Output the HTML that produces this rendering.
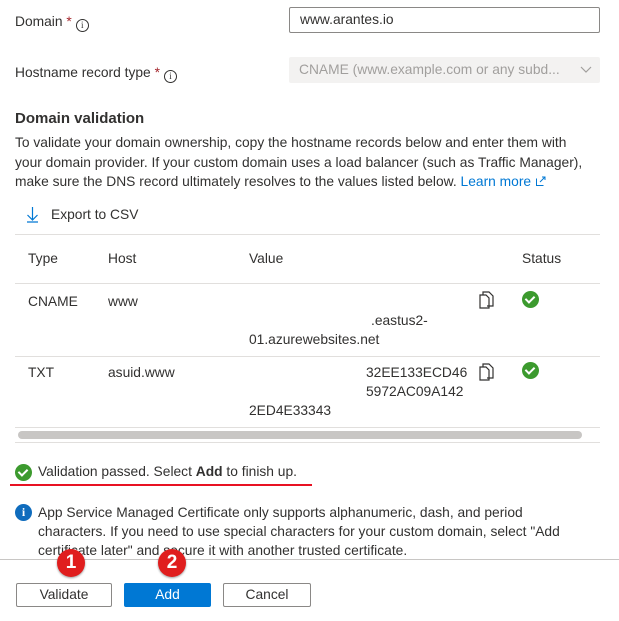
<!DOCTYPE html>
<html><head><meta charset="utf-8"><style>
*{margin:0;padding:0;box-sizing:border-box}
body{width:619px;height:621px;background:#fff;font-family:"Liberation Sans",Arial,sans-serif;font-size:13.8px;color:#323130;position:relative;overflow:hidden}
.a{position:absolute;white-space:nowrap;line-height:19px}
.req{color:#a4262c}
.info{display:inline-block;width:13px;height:13px;border:1px solid #323130;border-radius:50%;font-size:9px;line-height:11px;text-align:center;vertical-align:-2px;margin-left:4px;font-family:"Liberation Serif",serif}
.hl{position:absolute;left:15px;width:585px;height:1px;background:#e1dfdd}
.chk{position:absolute;width:17px;height:17px;border-radius:50%;background:#3c9a2e}
.chk:after{content:"";position:absolute;left:5px;top:3px;width:4px;height:7px;border:solid #fff;border-width:0 2px 2px 0;transform:rotate(45deg)}
.btn{position:absolute;top:583px;height:24px;border:1px solid #8a8886;border-radius:2px;text-align:center;line-height:22px;background:#fff}
.badge{position:absolute;width:28px;height:28px;border-radius:50%;background:#e01e1e;color:#fff;font-weight:bold;font-size:19px;text-align:center;line-height:28px;top:549px;box-shadow:0 1px 2px rgba(0,0,0,.4)}
</style></head><body>
<div class="a" style="left:15px;top:12px">Domain <span class="req">*</span><span class="info">i</span></div>
<div style="position:absolute;left:289px;top:7px;width:311px;height:26px;border:1px solid #8a8886;border-radius:2px"></div>
<div class="a" style="left:300px;top:10px">www.arantes.io</div>
<div class="a" style="left:15px;top:63px">Hostname record type <span class="req">*</span><span class="info">i</span></div>
<div style="position:absolute;left:289px;top:57px;width:311px;height:26px;background:#f3f2f1;border-radius:2px"></div>
<div class="a" style="left:299px;top:60px;color:#a19f9d">CNAME (www.example.com or any subd...</div>
<svg style="position:absolute;left:580px;top:66px" width="12" height="8"><path d="M1 1l5 5 5-5" fill="none" stroke="#a19f9d" stroke-width="1.2"/></svg>
<div class="a" style="left:15px;top:109px;font-weight:bold;font-size:15px">Domain validation</div>
<div class="a" style="left:15px;top:133px">To validate your domain ownership, copy the hostname records below and enter them with</div>
<div class="a" style="left:15px;top:153px">your domain provider. If your custom domain uses a load balancer (such as Traffic Manager),</div>
<div class="a" style="left:15px;top:172px">make sure the DNS record ultimately resolves to the values listed below. <span style="color:#0078d4">Learn more <svg width="11" height="11" style="vertical-align:-1px"><path d="M1.5 2.5v7h7M5 6l5-5M7 1h3v3" fill="none" stroke="#0078d4"/></svg></span></div>
<svg style="position:absolute;left:26px;top:206px" width="13" height="17"><path d="M6.5 1v13M1.5 9l5 5 5-5M1 16h11" fill="none" stroke="#0078d4" stroke-width="1.2"/></svg>
<div class="a" style="left:51px;top:205px">Export to CSV</div>
<div class="hl" style="top:234px"></div>
<div class="a" style="left:28px;top:249px">Type</div>
<div class="a" style="left:108px;top:249px">Host</div>
<div class="a" style="left:249px;top:249px">Value</div>
<div class="a" style="left:522px;top:249px">Status</div>
<div class="hl" style="top:283px"></div>
<div class="a" style="left:28px;top:292px">CNAME</div>
<div class="a" style="left:108px;top:292px">www</div>
<div class="a" style="left:371px;top:311px">.eastus2-</div>
<div class="a" style="left:249px;top:330px">01.azurewebsites.net</div>
<svg style="position:absolute;left:479px;top:291px" width="16" height="18"><path d="M4 4V1h6l4 4v10H8M1 4h6l3 3v10H1z" fill="none" stroke="#323130" stroke-width="1.2"/></svg>
<div class="chk" style="left:522px;top:291px"></div>
<div class="hl" style="top:356px"></div>
<div class="a" style="left:28px;top:363px">TXT</div>
<div class="a" style="left:108px;top:363px">asuid.www</div>
<div class="a" style="left:366px;top:363px">32EE133ECD46</div>
<div class="a" style="left:366px;top:382px">5972AC09A142</div>
<div class="a" style="left:249px;top:401px">2ED4E33343</div>
<svg style="position:absolute;left:479px;top:363px" width="16" height="18"><path d="M4 4V1h6l4 4v10H8M1 4h6l3 3v10H1z" fill="none" stroke="#323130" stroke-width="1.2"/></svg>
<div class="chk" style="left:522px;top:362px"></div>
<div class="hl" style="top:427px"></div>
<div style="position:absolute;left:18px;top:431px;width:564px;height:8px;border-radius:4px;background:#c8c6c4"></div>
<div class="hl" style="top:442px"></div>
<div class="chk" style="left:15px;top:464px"></div>
<div class="a" style="left:38px;top:462px">Validation passed. Select <b>Add</b> to finish up.</div>
<div style="position:absolute;left:10px;top:484px;width:302px;height:2px;background:#e81123"></div>
<div style="position:absolute;left:15px;top:504px;width:17px;height:17px;border-radius:50%;background:#0f6cbd;color:#fff;font-weight:bold;font-size:12px;text-align:center;line-height:17px;font-family:'Liberation Serif',serif">i</div>
<div class="a" style="left:38px;top:503px">App Service Managed Certificate only supports alphanumeric, dash, and period</div>
<div class="a" style="left:38px;top:522px">characters. If you need to use special characters for your custom domain, select "Add</div>
<div class="a" style="left:38px;top:541px">certificate later" and secure it with another trusted certificate.</div>
<div style="position:absolute;left:0;top:559px;width:619px;height:1px;background:#c8c6c4"></div>
<div class="btn" style="left:16px;width:96px">Validate</div>
<div class="btn" style="left:124px;width:87px;background:#0078d4;border-color:#0078d4;color:#fff">Add</div>
<div class="btn" style="left:223px;width:88px">Cancel</div>
<div class="badge" style="left:57px">1</div>
<div class="badge" style="left:158px">2</div>
</body></html>
